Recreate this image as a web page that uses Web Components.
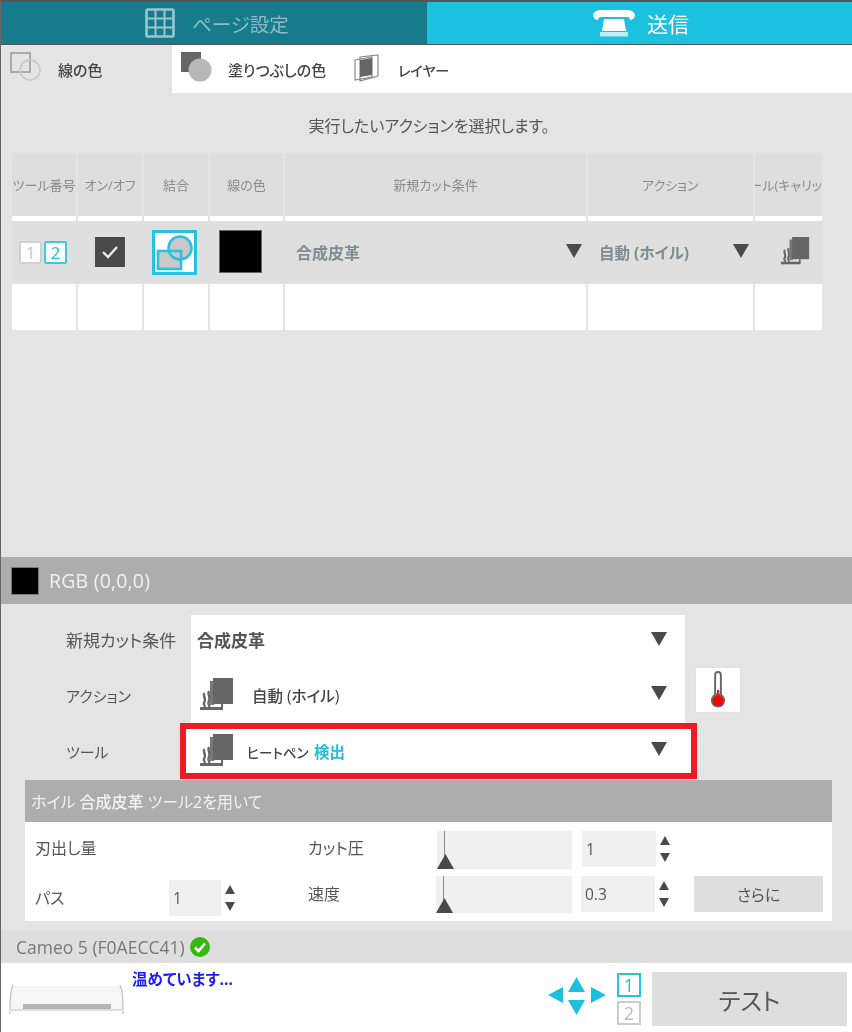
<!DOCTYPE html>
<html lang="ja">
<head>
<meta charset="utf-8">
<title>送信</title>
<style>
    html, body { margin: 0; padding: 0; background: #e4e4e4; }
    body { font-family: "Open Sans", "Noto Sans CJK JP", sans-serif; width: 852px; height: 1032px; overflow: hidden; }
</style>
</head>
<body>
<app-shell>
    <top-tabs></top-tabs>
    <sub-tabs></sub-tabs>
    <action-list></action-list>
    <color-bar>RGB (0,0,0)</color-bar>
    <cut-form></cut-form>
    <tool-panel></tool-panel>
    <status-bar>Cameo 5 (F0AECC41)</status-bar>
    <device-footer></device-footer>
</app-shell>

<script>
const foilIcon = (size) => `
    <svg width="${size}" height="${size}" viewBox="0 0 34 34" style="display:block">
        <path d="M4.500 15c-2 3 2 6 0 9s1 3 0 5M9 13c-2 3 2 7 0 10s1 4 0 6" fill="none" stroke="#666" stroke-width="2.4"/>
        <rect x="10" y="3" width="4" height="24" fill="#777"/>
        <rect x="13" y="0" width="20" height="26" fill="#666"/>
        <rect x="0" y="29" width="23" height="3" fill="#666"/>
        <rect x="21" y="26" width="2" height="4" fill="#666"/>
    </svg>`;

const downArrow = `<svg width="18" height="16" viewBox="0 0 18 16" style="display:block"><path d="M1 1h16L9 15z" fill="#4a4a4a"/></svg>`;

class BaseElement extends HTMLElement {
    constructor() {
        super();
        this.attachShadow({ mode: "open" });
    }

    connectedCallback() {
        this.shadowRoot.innerHTML = `<style>${this.getStyles()}</style>${this.getMarkup()}`;
    }
}

class AppShell extends BaseElement {
    getStyles() {
        return `
            :host {
                display: flex;
                flex-direction: column;
                box-sizing: border-box;
                height: 1032px;
                border-left: 1px solid #666;
                background: #e4e4e4;
                font-feature-settings: "palt";
                filter: blur(0.35px);
            }
        `;
    }

    getMarkup() {
        return `<slot></slot>`;
    }
}

class TopTabs extends BaseElement {
    getStyles() {
        return `
            :host {
                display: grid;
                grid-template-columns: 426px 425px;
                height: 45px;
                box-sizing: border-box;
                border-top: 2px solid #555;
                border-bottom: 1px solid #555;
                font-size: 21px;
            }
            div { display: flex; align-items: center; }
            .off { background: #167b8b; color: #8fbcc4; padding-left: 144px; font-size: 19.5px; }
            .on { background: #1dc1e0; color: #fff; padding-left: 166px; }
            .off svg { margin-right: 17px; }
            .on svg { margin-right: 12px; }
        `;
    }

    getMarkup() {
        return `
            <div class="off">
                <svg width="30" height="30" viewBox="0 0 30 30" fill="none" stroke="#9cc6cd" stroke-width="2">
                    <rect x="1.5" y="1.5" width="27" height="27" rx="1.5" stroke-width="2.6"/>
                    <path d="M10.5 2v26M19.5 2v26M2 10.5h26M2 19.5h26"/>
                </svg>
                <span>ページ設定</span>
            </div>
            <div class="on">
                <svg width="42" height="27" viewBox="0 0 42 27">
                    <path d="M7 0h28c4 0 7 3 7 5 0 3-3 5-5 5 0-2-1-3-3-3H8C6 7 5 8 5 10c-2 0-5-2-5-5 0-2 3-5 7-5z" fill="#fff"/>
                    <path d="M11 9h20l2 12H9z" fill="#fff"/>
                    <path d="M7 22h28v4.500H7z" fill="#bdeef7"/>
                </svg>
                <span>送信</span>
            </div>
        `;
    }
}

class SubTabs extends BaseElement {
    getStyles() {
        return `
            :host {
                display: flex;
                height: 48px;
                background: #fff;
                font-size: 15px;
                font-weight: 500;
                color: #444;
            }
            div { display: flex; align-items: center; position: relative; }
            svg { display: block; margin-top: -3px; }
            span { margin-top: 1px; }
            .first { width: 171px; background: #e4e4e4; padding-left: 9px; box-sizing: border-box; }
            .first span { margin-left: 17px; }
            .second { margin-left: 9px; width: 173px; }
            .second span { margin-left: 16px; }
            .third span { margin-left: 19px; font-size: 14px; }
        `;
    }

    getMarkup() {
        return `
            <div class="first">
                <svg width="31" height="32" viewBox="0 0 31 32" fill="none" stroke="#aaa" stroke-width="1.5">
                    <rect x="1" y="1" width="19" height="19" stroke-width="2"/>
                    <circle cx="20" cy="18" r="10" stroke="#c8c8c8"/>
                </svg>
                <span>線の色</span>
            </div>
            <div class="second">
                <svg width="31" height="32" viewBox="0 0 31 32">
                    <rect x="0" y="0" width="20" height="20" fill="#666"/>
                    <circle cx="19" cy="18" r="11.5" fill="#b8b8b8"/>
                </svg>
                <span>塗りつぶしの色</span>
            </div>
            <div class="third">
                <svg width="25" height="28" viewBox="0 0 25 28" fill="none" stroke="#888" stroke-width="1.2">
                    <path d="M1 6l17-3v20L1 26z" fill="#fff"/>
                    <path d="M6 3l18-2v21L6 27z" fill="none"/>
                    <path d="M6 6l12-2v17L6 23z" fill="#666" stroke="none"/>
                </svg>
                <span>レイヤー</span>
            </div>
        `;
    }
}

class ActionList extends BaseElement {
    getStyles() {
        return `
            :host {
                display: block;
                height: 464px;
                box-sizing: border-box;
                padding-top: 23px;
                font-size: 16px;
                color: #555;
            }
            p { margin: 0; height: 20px; line-height: 20px; text-align: center; padding-left: 5px; }
            .table { margin: 17px 0 0 11px; width: 810px; }
            .row { display: grid; grid-template-columns: 64px 64px 64px 73px 301px 164.5px 67px; column-gap: 2px; }
            .row > div { display: flex; align-items: center; justify-content: center; overflow: hidden; white-space: nowrap; position: relative; }
            .head { height: 63px; font-size: 13px; color: #8b8b8b; }
            .head > div { background: #dedede; }
            .strip { height: 5px; }
            .strip > div { background: #fff; }
            .sel { height: 62px; margin-bottom: 1px; background: #dfdfdf; color: #7f8b92; font-size: 16px; font-weight: 700; }
            .empty { height: 46px; }
            .empty > div { background: #fff; }
            .num { display: flex; gap: 2px; margin-left: -2px; }
            .num b { width: 19px; height: 19px; display: flex; align-items: center; justify-content: center; background: #fff; border: 2px solid #d0d0d0; border-radius: 2px; font-size: 17px; font-weight: 400; color: #c4c4c4; }
            .num b.on { border-color: #3fc8e2; color: #1dbfdf; }
            .check { width: 30px; height: 30px; background: #4a4a4a; display: flex; align-items: center; justify-content: center; }
            .swatch { width: 43px; height: 43px; background: #000; border: 1px solid #666; box-sizing: border-box; margin-left: -13px; margin-top: -1px; }
            .merge { margin-left: -4px; }
            .text { justify-content: flex-start !important; padding-left: 11px; }
            .small { font-size: 15.5px; }
            .text svg { position: absolute; top: 22px; }
            .tool { margin-left: 14px; margin-top: -1px; }
        `;
    }

    getMarkup() {
        const heads = ['ツール番号', 'オン/オフ', '結合', '線の色', '新規カット条件', 'アクション', 'ツール(キャリッジ)'];
        const blanks = heads.map(() => `<div></div>`).join('');

        return `
            <p>実行したいアクションを選択します。</p>
            <div class="table">
                <div class="row head">${heads.map(h => `<div>${h}</div>`).join('')}</div>
                <div class="row strip">${blanks}</div>
                <div class="row sel">
                    <div><span class="num"><b>1</b><b class="on">2</b></span></div>
                    <div><span class="check">
                        <svg width="18" height="14" viewBox="0 0 18 14"><path d="M2 7l5 5 9-10" fill="none" stroke="#eee" stroke-width="2.4"/></svg>
                    </span></div>
                    <div><svg class="merge" width="45" height="45" viewBox="0 0 45 45">
                        <rect x="1.5" y="1.5" width="42" height="42" fill="#fff" stroke="#25c3e0" stroke-width="3"/>
                        <circle cx="28" cy="18" r="11.5" fill="#c9c9c9"/>
                        <rect x="6" y="21" width="23" height="18" fill="#c9c9c9"/>
                        <circle cx="28" cy="18" r="11.5" fill="none" stroke="#25c3e0" stroke-width="2.6"/>
                        <rect x="6" y="21" width="23" height="18" fill="none" stroke="#25c3e0" stroke-width="2.6"/>
                    </svg></div>
                    <div><span class="swatch"></span></div>
                    <div class="text">合成皮革<svg style="right:3px" width="18" height="16" viewBox="0 0 18 16"><path d="M1 1h16L9 15z" fill="#4a4a4a"/></svg></div>
                    <div class="text small">自動 (ホイル)<svg style="right:3px" width="18" height="16" viewBox="0 0 18 16"><path d="M1 1h16L9 15z" fill="#4a4a4a"/></svg></div>
                    <div><span class="tool">${foilIcon(29)}</span></div>
                </div>
                <div class="row empty">${blanks}</div>
            </div>
        `;
    }
}

class ColorBar extends BaseElement {
    getStyles() {
        return `
            :host {
                display: flex;
                align-items: center;
                height: 47px;
                background: #adadad;
                color: #f1f1f1;
                font-size: 19.5px;
                letter-spacing: .2px;
                padding-left: 10px;
                box-sizing: border-box;
            }
            i { width: 28px; height: 28px; background: #000; border: 1px solid #777; box-sizing: border-box; margin-right: 10px; }
        `;
    }

    getMarkup() {
        return `<i></i><slot></slot>`;
    }
}

class CutRow extends BaseElement {
    getStyles() {
        return `
            :host {
                display: grid;
                grid-template-columns: 190px 494px auto;
                height: var(--row-height, 56px);
                font-size: var(--label-size, 15px);
                color: #555;
            }
            .label { padding-left: 65px; display: flex; align-items: center; margin-top: var(--label-shift, 0); }
            .box { background: #fff; position: relative; display: flex; align-items: center; font-size: 15.5px; font-weight: 500; color: #444; }
            .arrow { position: absolute; right: 17px; top: 50%; margin-top: -10px; }
            ::slotted([slot="extra"]) { align-self: start; margin-left: 10px; }
        `;
    }

    getMarkup() {
        return `
            <div class="label"><slot name="label"></slot></div>
            <div class="box"><slot></slot><span class="arrow">${downArrow}</span></div>
            <slot name="extra"></slot>
        `;
    }
}

class CutForm extends BaseElement {
    getStyles() {
        return `
            :host { display: block; height: 176px; box-sizing: border-box; padding-top: 11px; }
            .val { margin: -4px 0 0 6px; font-size: 17px; font-weight: 700; color: #555; }
            .icon { margin-left: 9px; }
            .txt { margin-left: 18px; }
            .txt2 { margin-left: 13px; font-size: 13.5px; }
            .blue { color: #25bcd9; font-weight: 700; font-size: 15.5px; margin-left: 2px; }
            .thermo { display: flex; align-items: center; justify-content: center; width: 46px; height: 46px; background: #fff; border: 1px solid #e0e0e0; box-sizing: border-box; }
            .red {
                position: absolute;
                left: -11px;
                right: -12px;
                top: 0;
                bottom: 0;
                border: 6px solid #ec1c24;
                background:
                    linear-gradient(#fff, #fff) left / 5px 100% no-repeat,
                    linear-gradient(#fff, #fff) right / 6px 100% no-repeat;
                pointer-events: none;
            }
        `;
    }

    getMarkup() {
        return `
            <cut-row style="--row-height:52px;--label-shift:-4px;--label-size:17px">
                <span slot="label">新規カット条件</span>
                <span class="val">合成皮革</span>
            </cut-row>
            <cut-row>
                <span slot="label">アクション</span>
                <span class="icon">${foilIcon(34)}</span>
                <span class="txt">自動 (ホイル)</span>
                <span slot="extra" class="thermo">
                    <svg width="16" height="38" viewBox="0 0 16 40">
                        <rect x="5" y="1" width="6" height="28" rx="3" fill="#fff" stroke="#666" stroke-width="2"/>
                        <rect x="7" y="20" width="2" height="10" fill="#f00"/>
                        <circle cx="8" cy="31" r="7.5" fill="#666"/>
                        <circle cx="8" cy="31" r="5.5" fill="#f00"/>
                    </svg>
                </span>
            </cut-row>
            <cut-row>
                <span slot="label">ツール</span>
                <span class="icon">${foilIcon(34)}</span>
                <span class="txt2">ヒートペン <span class="blue">検出</span></span>
                <span class="red"></span>
            </cut-row>
        `;
    }
}

class NumBox extends BaseElement {
    getStyles() {
        return `
            :host { display: flex; align-items: center; font-size: 15.5px; color: #555; }
            .v { flex: 1; height: 100%; background: #f0f0f0; display: flex; align-items: center; padding-left: 4px; box-sizing: border-box; }
            .s { display: flex; flex-direction: column; gap: 8px; width: 10px; margin-left: 4px; margin-right: 1px; }
            svg { display: block; }
        `;
    }

    getMarkup() {
        return `
            <div class="v">${this.getAttribute('value')}</div>
            <div class="s">
                <svg width="10" height="9" viewBox="0 0 10 9"><path d="M5 0l5 9H0z" fill="#4a4a4a"/></svg>
                <svg width="10" height="9" viewBox="0 0 10 9"><path d="M0 0h10L5 9z" fill="#4a4a4a"/></svg>
            </div>
        `;
    }
}

class SliderBox extends BaseElement {
    getStyles() {
        return `
            :host { display: block; position: relative; background: #f0f0f0; }
            i { position: absolute; left: 7px; top: 0; bottom: 8px; width: 1px; background: #888; }
            svg { position: absolute; left: 0; bottom: 0; display: block; }
        `;
    }

    getMarkup() {
        return `<i></i><svg width="17" height="15" viewBox="0 0 17 15"><path d="M8.5 0L17 15H0z" fill="#4a4a4a"/></svg>`;
    }
}

class ToolPanel extends BaseElement {
    getStyles() {
        return `
            :host { display: block; margin-left: 24px; width: 807px; height: 141px; font-size: 16px; color: #555; }
            .head { height: 42px; background: #adadad; color: #f2f2f2; display: flex; align-items: center; padding-left: 6px; box-sizing: border-box; }
            .head b { font-weight: 500; margin: 0 4px; }
            .body {
                height: 99px;
                background: #fff;
                box-sizing: border-box;
                padding: 9px 0 0 10px;
                display: grid;
                grid-template-columns: 134px 67px 72px 128px 136px 9px 89px 24px 129px;
                grid-template-rows: 38px 37px;
                row-gap: 7px;
            }
            .l1 { grid-column: 1 / span 3; grid-row: 1; align-self: center; margin-top: -6px; }
            .l2 { grid-column: 1; grid-row: 2; align-self: center; margin-top: 4px; }
            .n0 { grid-column: 2; grid-row: 2; height: 36px; margin-top: 4px; }
            .l3 { grid-column: 4; grid-row: 1; align-self: center; margin-top: -6px; }
            .l4 { grid-column: 4; grid-row: 2; align-self: center; margin-top: -4px; }
            .s1 { grid-column: 5; grid-row: 1; margin-left: 1px; }
            .s2 { grid-column: 5; grid-row: 2; }
            .n1 { grid-column: 7; grid-row: 1; height: 36px; margin-left: 1px; margin-right: -1px; }
            .n2 { grid-column: 7; grid-row: 2; height: 36px; }
            .more { grid-column: 9; grid-row: 2; height: 36px; background: #dedede; display: flex; align-items: center; justify-content: center; }
        `;
    }

    getMarkup() {
        return `
            <div class="head">ホイル<b>合成皮革</b>ツール2を用いて</div>
            <div class="body">
                <span class="l1">刃出し量</span>
                <span class="l2">パス</span>
                <num-box class="n0" value="1"></num-box>
                <span class="l3">カット圧</span>
                <span class="l4">速度</span>
                <slider-box class="s1"></slider-box>
                <slider-box class="s2"></slider-box>
                <num-box class="n1" value="1"></num-box>
                <num-box class="n2" value="0.3"></num-box>
                <div class="more">さらに</div>
            </div>
        `;
    }
}

class StatusBar extends BaseElement {
    getStyles() {
        return `
            :host {
                display: flex;
                align-items: center;
                height: 33px;
                margin-top: 9px;
                background: #dedede;
                color: #777;
                font-size: 17.5px;
                padding-left: 15px;
                box-sizing: border-box;
            }
            svg { margin-left: 5px; display: block; }
        `;
    }

    getMarkup() {
        return `
            <slot></slot>
            <svg width="20" height="20" viewBox="0 0 20 20">
                <circle cx="10" cy="10" r="10" fill="#35b80f"/>
                <path d="M5 10.5l3.5 3.5L15 6.5" fill="none" stroke="#fff" stroke-width="2.6"/>
            </svg>
        `;
    }
}

class DeviceFooter extends BaseElement {
    getStyles() {
        return `
            :host { display: flex; height: 69px; background: #fff; position: relative; }
            .machine { margin: 21px 0 0 8px; display: block; flex: none; }
            .msg { margin: 4px 0 0 8px; width: 416px; flex: none; color: #1a1aff; font-size: 15.5px; font-weight: 700; line-height: 24px; }
            .nav { margin-top: 14px; display: block; flex: none; }
            .boxes { margin: 10px 0 0 11px; width: 24px; display: flex; flex-direction: column; gap: 4px; }
            .boxes b { height: 24px; box-sizing: border-box; border: 2px solid #ccc; display: flex; align-items: center; justify-content: center; font-size: 18px; font-weight: 400; color: #bbb; }
            .boxes b.on { border-color: #25c3e0; color: #1dbfdf; }
            .test { margin: 9px 0 0 11px; width: 195px; height: 54px; background: #dedede; color: #555; font-size: 24px; display: flex; align-items: center; justify-content: center; }
        `;
    }

    getMarkup() {
        return `
            <svg class="machine" width="115" height="30" viewBox="0 0 115 30">
                <path d="M4 2h107l3 24H1z" fill="#f6f6f6"/>
                <path d="M4 1C2 5 1 14 1 26M111 1c2 4 3 13 3 25" fill="none" stroke="#c6c6c6" stroke-width="1.4"/>
                <path d="M1 26h113" stroke="#ddd" stroke-width="2"/>
                <rect x="14" y="20" width="88" height="5" fill="#b5b5b5"/>
                <path d="M1 27v3M114 27v3" stroke="#ccc" stroke-width="1.4"/>
            </svg>
            <div class="msg">温めています...</div>
            <svg class="nav" width="58" height="39" viewBox="0 0 58 39">
                <path d="M0 18L15 10v16z M58 18L43 10v16z M28.500 0L37 15H20z M28.500 38L20 23h17z" fill="#1dbfdf"/>
            </svg>
            <div class="boxes"><b class="on">1</b><b>2</b></div>
            <div class="test">テスト</div>
        `;
    }
}

customElements.define("app-shell", AppShell);
customElements.define("top-tabs", TopTabs);
customElements.define("sub-tabs", SubTabs);
customElements.define("action-list", ActionList);
customElements.define("color-bar", ColorBar);
customElements.define("cut-row", CutRow);
customElements.define("cut-form", CutForm);
customElements.define("num-box", NumBox);
customElements.define("slider-box", SliderBox);
customElements.define("tool-panel", ToolPanel);
customElements.define("status-bar", StatusBar);
customElements.define("device-footer", DeviceFooter);
</script>
</body>
</html>
